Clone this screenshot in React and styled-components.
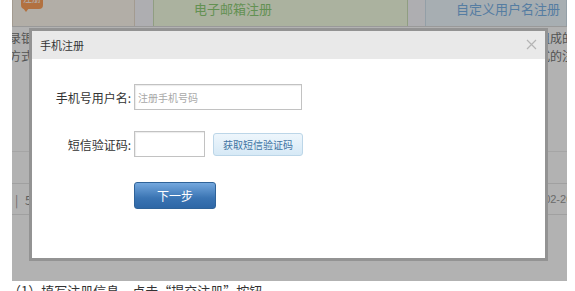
import React from 'react'
import styled, { createGlobalStyle } from 'styled-components'

const GlobalStyle = createGlobalStyle`
  html, body {
    margin: 0;
    padding: 0;
    background: #ffffff;
  }
  body {
    font-family: "Noto Sans CJK SC", "Liberation Sans", sans-serif;
    width: 575px;
    height: 291px;
    overflow: hidden;
  }
`

export default function App() {
  return (
    <>
      <GlobalStyle />
      <Page>
        <Shot>
          <TabRow>
            <Tab $bg="#fffaf0" $w={123} $line="#eadfce">
              <Bubble>注册</Bubble>
            </Tab>
            <TabGap $w={18} />
            <Tab $bg="#f5ffe4" $w={255} $line="#cfe3bb" $color="#8fd078">
              <TabLabel $left={40}>电子邮箱注册</TabLabel>
            </Tab>
            <TabGap $w={17} />
            <Tab $bg="#f0f9ff" $w={142} $line="#d3e4f0" $color="#7ab3e8">
              <TabLabel $left={30}>自定义用户名注册</TabLabel>
            </Tab>
          </TabRow>

          <Body>
            <SideText $shift={-3}>
              <div>录银行卡号</div>
              <div>方式进行注册</div>
            </SideText>
            <div />
            <SideText $shift={-2}>
              <div>组成的账号</div>
              <div>式的注册方式</div>
            </SideText>
          </Body>

          <Table>
            <TableRow $h={31} />
            <TableRow $h={30}>
              <RowText><Bar>|</Bar> 5</RowText>
              <DateText>2014-02-20</DateText>
            </TableRow>
          </Table>

          <Overlay>
            <Modal>
              <ModalHeader>
                <ModalTitle>手机注册</ModalTitle>
                <CloseButton aria-label="close">
                  <svg width="11" height="11" viewBox="0 0 11 11">
                    <path d="M1 1 L10 10 M10 1 L1 10" stroke="#b4b4b4" strokeWidth="1.2" fill="none" />
                  </svg>
                </CloseButton>
              </ModalHeader>
              <Form>
                <FormRow>
                  <Label>手机号用户名:</Label>
                  <TextInput $w={168} placeholder="注册手机号码" />
                </FormRow>
                <FormRow $top={21}>
                  <Label>短信验证码:</Label>
                  <TextInput $w={71} />
                  <SmsButton>获取短信验证码</SmsButton>
                </FormRow>
                <FormRow $top={25}>
                  <Spacer />
                  <NextButton>下一步</NextButton>
                </FormRow>
              </Form>
            </Modal>
          </Overlay>
        </Shot>
        <Caption>（1）填写注册信息，点击“提交注册”按钮</Caption>
      </Page>
    </>
  )
}

const Page = styled.div`
  padding: 0 8px 0 12px;
`

const Shot = styled.div`
  position: relative;
  width: 555px;
  height: 281px;
  overflow: hidden;
  background: #ffffff;
`

const TabRow = styled.div`
  display: flex;
  height: 26px;
  border-bottom: 1px solid #dcdcdc;
`

const Tab = styled.div`
  position: relative;
  width: ${p => p.$w}px;
  flex: none;
  background: ${p => p.$bg};
  border-left: 1px solid ${p => p.$line};
  border-right: 1px solid ${p => p.$line};
  box-sizing: border-box;
  color: ${p => p.$color || '#666'};
`

const TabGap = styled.div`
  width: ${p => p.$w}px;
  flex: none;
  background: #fafafe;
`

const TabLabel = styled.div`
  font-size: 13px;
  line-height: 18px;
  padding-left: ${p => p.$left}px;
  white-space: nowrap;
`

const Bubble = styled.div`
  position: absolute;
  left: 8px;
  top: -7px;
  width: 22px;
  height: 16px;
  border-radius: 4px;
  background: #ffa35c;
  color: #fff;
  font-size: 9px;
  line-height: 12px;
  text-align: center;

  &::after {
    content: '';
    position: absolute;
    left: 2px;
    bottom: -3px;
    border-left: 3px solid transparent;
    border-right: 3px solid transparent;
    border-top: 4px solid #ffa35c;
  }
`

const Body = styled.div`
  display: grid;
  grid-template-columns: 60px 1fr 27px;
  height: 122px;
  padding-top: 2px;
`

const SideText = styled.div`
  font-size: 12px;
  line-height: 18px;
  color: #777;
  white-space: nowrap;
  overflow: hidden;
  text-indent: ${p => p.$shift}px;
`

const Table = styled.div`
  border-top: 1px solid #ececec;
`

const TableRow = styled.div`
  display: grid;
  grid-template-columns: 504px 1fr;
  align-items: center;
  height: ${p => p.$h}px;
  background: #ffffff;
  border-bottom: 1px solid #e6e6e6;
`

const RowText = styled.div`
  font-size: 12px;
  color: #888;
  padding-left: 3px;
  white-space: nowrap;
`

const Bar = styled.span`
  color: #999;
  margin-right: 4px;
`

const DateText = styled.div`
  font-family: "Liberation Sans", sans-serif;
  font-size: 11px;
  color: #999;
  white-space: nowrap;
`

const Overlay = styled.div`
  position: absolute;
  inset: 0;
  background: rgba(0, 0, 0, 0.3);
  padding: 28px 0 0 17px;
`

const Modal = styled.div`
  width: 519px;
  height: 233px;
  box-sizing: border-box;
  border: 3px solid #939393;
  background: #ffffff;
`

const ModalHeader = styled.div`
  display: flex;
  align-items: center;
  justify-content: space-between;
  height: 28px;
  padding: 0 8px;
  background: #e9e9e9;
`

const ModalTitle = styled.div`
  font-size: 11px;
  color: #333;
`

const CloseButton = styled.div`
  display: flex;
  width: 11px;
  height: 11px;
  margin-top: -1px;
`

const Form = styled.div`
  padding-top: 25px;
`

const FormRow = styled.div`
  display: flex;
  align-items: center;
  margin-top: ${p => p.$top || 0}px;
`

const Label = styled.div`
  width: 99px;
  margin-right: 3px;
  text-align: right;
  font-size: 12px;
  color: #333;
`

const Spacer = styled.div`
  width: 102px;
`

const TextInput = styled.input`
  width: ${p => p.$w}px;
  height: 26px;
  box-sizing: border-box;
  border: 1px solid #c2c2c2;
  box-shadow: inset 1px 1px 1px rgba(0, 0, 0, 0.08);
  padding: 0 3px;
  font-family: "Noto Sans CJK SC", sans-serif;
  font-size: 10px;
  outline: none;

  &::placeholder {
    color: #a8a8a8;
  }
`

const SmsButton = styled.div`
  margin-left: 8px;
  width: 90px;
  height: 23px;
  box-sizing: border-box;
  border: 1px solid #bcd6e8;
  border-radius: 3px;
  background: linear-gradient(#eef6fc, #d6e9f6);
  color: #3f74a3;
  font-size: 10px;
  display: flex;
  align-items: center;
  justify-content: center;
`

const NextButton = styled.div`
  width: 82px;
  height: 27px;
  box-sizing: border-box;
  border: 1px solid #2f6399;
  border-radius: 3px;
  background: linear-gradient(#74a8de, #3a74b3 60%, #2e67a6);
  color: #ffffff;
  font-size: 12px;
  display: flex;
  align-items: center;
  justify-content: center;
`

const Caption = styled.div`
  margin-top: 2px;
  margin-left: -4px;
  font-size: 13px;
  line-height: 16px;
  color: #333;
  white-space: nowrap;
`
